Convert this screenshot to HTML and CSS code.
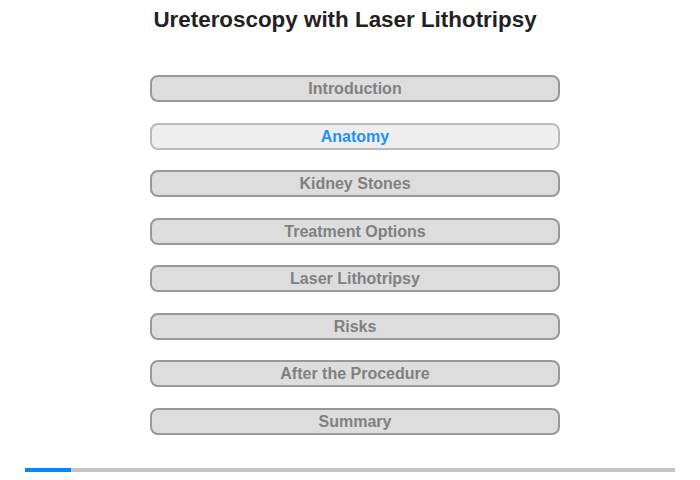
FILE: index.html
```html
<!DOCTYPE html>
<html lang="en">
<head>
    <meta charset="UTF-8">
    <meta name="viewport" content="width=device-width, initial-scale=1.0">
    <title>Ureteroscopy with Laser Lithotripsy</title>
    <link rel="stylesheet" href="styles.css">
</head>
<body>
    <h1 class="title">Ureteroscopy with Laser Lithotripsy</h1>

    <div class="menu">
        <div class="item">Introduction</div>
        <div class="item active">Anatomy</div>
        <div class="item">Kidney Stones</div>
        <div class="item">Treatment Options</div>
        <div class="item">Laser Lithotripsy</div>
        <div class="item">Risks</div>
        <div class="item">After the Procedure</div>
        <div class="item">Summary</div>
    </div>

    <div class="progress">
        <div class="progress-fill" style="width: 7%"></div>
    </div>
</body>
</html>
```

FILE: styles.css
```css
body {
    font-family: "Liberation Sans", Arial, sans-serif;
    background-color: #fff;
    margin: 0;
    width: 700px;
    height: 480px;
    display: flex;
    flex-direction: column;
    align-items: center;
}
.title {
    font-size: 22.4px;
    font-weight: bold;
    color: #222;
    margin: 7px 0 0 0;
    line-height: 26px;
    padding-right: 10px;
}
.menu {
    margin-top: 42px;
    display: flex;
    flex-direction: column;
    gap: 20.5px;
    padding-left: 10px;
}
.item {
    width: 406px;
    height: 23px;
    line-height: 23px;
    border: 2px solid #999;
    border-radius: 8px;
    background-color: #ddd;
    color: #808080;
    font-size: 16px;
    font-weight: bold;
    text-align: center;
    cursor: pointer;
}
.item.active {
    background-color: #eee;
    border-color: #bbb;
    color: #1e90ff;
}
.progress {
    margin-top: auto;
    margin-bottom: 8px;
    width: 650px;
    height: 4px;
    background-color: #c4c4c4;
}
.progress-fill {
    height: 100%;
    background-color: #0088ff;
}
```
